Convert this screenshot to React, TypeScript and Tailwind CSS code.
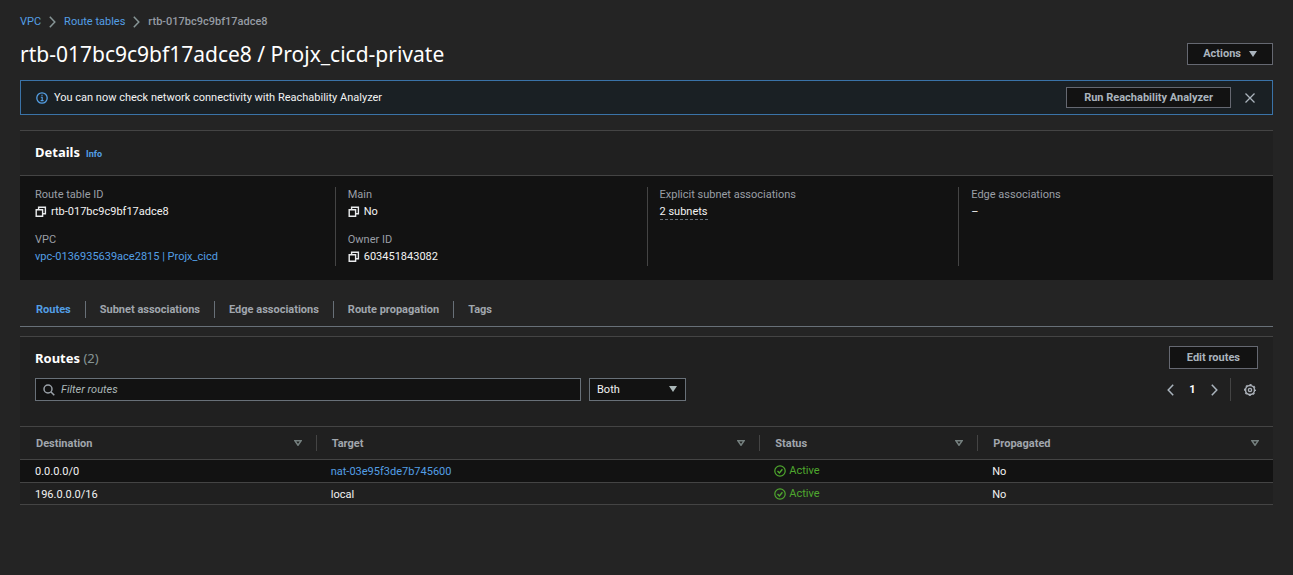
import type { ReactNode } from "react";

const fontStack = "font-['Roboto','Noto_Sans',sans-serif]";
const headingFont = "font-['Noto_Sans','Open_Sans',sans-serif]";

function Chevron({ left = false, className = "" }: { left?: boolean; className?: string }) {
  return (
    <svg width="7" height="12" viewBox="0 0 7 12" fill="none" stroke="currentColor" strokeWidth="1.5" className={className} aria-hidden="true">
      <path d={left ? "M6.2 0.8 L1.2 6 L6.2 11.2" : "M0.8 0.8 L5.8 6 L0.8 11.2"} />
    </svg>
  );
}

function InfoIcon() {
  return (
    <svg width="12" height="12" viewBox="0 0 12 12" fill="none" stroke="#539fe5" strokeWidth="1.3" className="shrink-0" aria-hidden="true">
      <circle cx="6" cy="6" r="5.2" />
      <path d="M4.8 5.2 H6.2 V8.5 M4.6 8.6 H7.6 M5.3 3.3 H6.7" strokeWidth="1.1" />
    </svg>
  );
}

function CopyIcon() {
  return (
    <svg width="12" height="12" viewBox="0 0 12 12" fill="none" stroke="#e9ebed" strokeWidth="1.4" className="shrink-0" aria-hidden="true">
      <path d="M1.2 3.7 H7.6 V10.3 H1.2 Z" />
      <path d="M3.6 3.7 V1.3 H10.4 V7.8 H7.6" />
    </svg>
  );
}

function Caret() {
  return (
    <svg width="8" height="6" viewBox="0 0 8 6" fill="currentColor" aria-hidden="true">
      <path d="M0 0 H8 L4 6 Z" />
    </svg>
  );
}

function SortIcon() {
  return (
    <svg width="8" height="6" viewBox="0 0 8 6" fill="none" stroke="#75807f" strokeWidth="1.5" aria-hidden="true">
      <path d="M1 0.8 H7 L4 5.2 Z" />
    </svg>
  );
}

function CheckIcon() {
  return (
    <svg width="12" height="12" viewBox="0 0 12 12" fill="none" stroke="currentColor" strokeWidth="1.2" className="shrink-0" aria-hidden="true">
      <circle cx="6" cy="6" r="5.2" />
      <path d="M3.5 6 L5.4 7.9 L8.4 4.3" strokeWidth="1.4" />
    </svg>
  );
}

function SearchIcon() {
  return (
    <svg width="12" height="12" viewBox="0 0 12 12" fill="none" stroke="#9aa1a8" strokeWidth="1.5" aria-hidden="true">
      <circle cx="5" cy="5" r="4" />
      <path d="M8 8 L11.3 11.3" />
    </svg>
  );
}

function GearIcon() {
  return (
    <svg width="12" height="12" viewBox="0 0 12 12" fill="none" stroke="#aab0b8" aria-hidden="true">
      <circle cx="6" cy="6" r="4.5" strokeWidth="1.5" />
      <circle cx="6" cy="6" r="5.4" strokeWidth="1.2" strokeDasharray="2.1 2.14" strokeDashoffset="1.05" />
      <circle cx="6" cy="6" r="1.6" strokeWidth="1.4" />
    </svg>
  );
}

function Field({ label, children }: { label: string; children: ReactNode }) {
  return (
    <div>
      <dt className="leading-4 text-[#9a9fa6]">{label}</dt>
      <dd className="flex h-[18px] items-center gap-1 whitespace-nowrap text-[#f2f3f3]">{children}</dd>
    </div>
  );
}

const buttonStyle =
  "flex items-center justify-center border border-[#656871] bg-[#121212] font-bold text-[#aab4bd] whitespace-nowrap";

const tabs = ["Routes", "Subnet associations", "Edge associations", "Route propagation", "Tags"];

const columns = [
  { name: "Destination", width: "w-[23.6%]" },
  { name: "Target", width: "w-[35.4%]" },
  { name: "Status", width: "w-[17.4%]" },
  { name: "Propagated", width: "w-[23.6%]" },
];

const routes = [
  { destination: "0.0.0.0/0", target: "nat-03e95f3de7b745600", link: true, row: "h-[23px] bg-[#121212]" },
  { destination: "196.0.0.0/16", target: "local", link: false, row: "h-[22px] bg-[#202020]" },
];

export default function App() {
  return (
    <main className={`min-h-screen bg-[#242424] px-5 pt-3 text-[11px] leading-4 text-[#f2f3f3] ${fontStack}`}>
      <nav aria-label="Breadcrumb">
        <ol className="flex h-5 items-center gap-2 text-[#539fe5]">
          <li><a href="#vpc">VPC</a></li>
          <li><Chevron className="text-[#879596]" /></li>
          <li><a href="#route-tables">Route tables</a></li>
          <li><Chevron className="text-[#879596]" /></li>
          <li className="font-medium text-[#959ba3]">rtb-017bc9c9bf17adce8</li>
        </ol>
      </nav>

      <header className="mt-[6px] flex h-8 items-center justify-between">
        <h1 className={`text-[21px] leading-8 text-white ${headingFont}`}>rtb-017bc9c9bf17adce8 / Projx_cicd-private</h1>
        <button type="button" className={`${buttonStyle} h-[22px] gap-2 px-[15px]`}>
          Actions <Caret />
        </button>
      </header>

      <section aria-label="Notification" className="mt-[10px] flex h-[35px] items-center gap-[6px] border border-[#3a73a8] bg-[#1a2024] pr-[17px] pl-[15px]">
        <InfoIcon />
        <p className="flex-1 text-[#f2f3f3]">You can now check network connectivity with Reachability Analyzer</p>
        <button type="button" className={`${buttonStyle} h-[21px] px-[17px]`}>Run Reachability Analyzer</button>
        <button type="button" aria-label="Dismiss" className="ml-2 text-[#aab4bd]">
          <svg width="10" height="10" viewBox="0 0 10 10" stroke="currentColor" strokeWidth="1.3" aria-hidden="true">
            <path d="M0.5 0.5 L9.5 9.5 M9.5 0.5 L0.5 9.5" />
          </svg>
        </button>
      </section>

      <section className="mt-[15px] border-t border-[#444444] bg-[#121212]">
        <div className="flex h-[45px] items-center gap-[6px] border-b border-[#444444] bg-[#202020] px-[15px] pb-[2px]">
          <h2 className={`text-[13px] font-bold text-white ${headingFont}`}>Details</h2>
          <a href="#info" className="pt-[3px] text-[9px] font-bold text-[#539fe5]">Info</a>
        </div>
        <div className="grid grid-cols-4 px-[3px] pt-[11px] pb-[14px]">
          <dl className="flex flex-col gap-[11px] pl-3">
            <Field label="Route table ID"><CopyIcon />rtb-017bc9c9bf17adce8</Field>
            <Field label="VPC"><a href="#vpc-id" className="text-[#539fe5]">vpc-0136935639ace2815 | Projx_cicd</a></Field>
          </dl>
          <dl className="flex flex-col gap-[11px] border-l border-[#444444] pl-3">
            <Field label="Main"><CopyIcon />No</Field>
            <Field label="Owner ID"><CopyIcon />603451843082</Field>
          </dl>
          <dl className="border-l border-[#444444] pl-3">
            <Field label="Explicit subnet associations">
              <span className="border-b border-dashed border-[#687078] leading-[14px]">2 subnets</span>
            </Field>
          </dl>
          <dl className="border-l border-[#444444] pl-3">
            <Field label="Edge associations">–</Field>
          </dl>
        </div>
      </section>

      <div role="tablist" className="mt-[13px] flex h-[34px] items-center border-b border-[#687078] pl-[2px]">
        {tabs.map((tab, i) => (
          <button
            key={tab}
            type="button"
            role="tab"
            aria-selected={i === 0}
            className={`h-[17px] border-[#687078] px-[14px] font-bold ${i === 0 ? "text-[#539fe5]" : "border-l text-[#a0a6ad]"}`}
          >
            {tab}
          </button>
        ))}
      </div>

      <section className="mt-[9px] border-t border-[#444444] bg-[#202020]">
        <div className="flex h-[41px] items-center justify-between px-[15px]">
          <h2 className={`text-[13px] font-bold text-white ${headingFont}`}>
            Routes <span className="font-normal text-[#879596]">(2)</span>
          </h2>
          <button type="button" className={`${buttonStyle} h-[23px] px-[17px]`}>Edit routes</button>
        </div>
        <div className="flex items-center px-[15px] pb-[25px]">
          <label className="flex h-[23px] w-[546px] items-center gap-[6px] border border-[#687078] bg-[#121212] px-[7px]">
            <SearchIcon />
            <input type="text" aria-label="Filter routes" placeholder="Filter routes" className="min-w-0 flex-1 bg-transparent outline-none placeholder:text-[#aab7b8] placeholder:italic" />
          </label>
          <div className="relative ml-2">
            <select aria-label="Propagation filter" className="block h-[23px] w-[97px] appearance-none border border-[#687078] bg-[#121212] px-[7px] text-[#f2f3f3]">
              <option>Both</option>
            </select>
            <span className="pointer-events-none absolute top-2 right-[9px] text-[#aab7b8]"><Caret /></span>
          </div>
          <div className="ml-auto flex items-center text-[#aab4bd]">
            <button type="button" aria-label="Previous page"><Chevron left /></button>
            <button type="button" aria-current="page" className="w-[37px] font-bold text-white">1</button>
            <button type="button" aria-label="Next page"><Chevron /></button>
            <span className="mr-[13px] ml-3 h-[23px] w-px bg-[#444444]" />
            <button type="button" aria-label="Preferences" className="mr-[2px]"><GearIcon /></button>
          </div>
        </div>
        <table className="w-full table-fixed border-collapse text-left">
          <thead>
            <tr className="h-[33px] border-y border-[#444444]">
              {columns.map((column, i) => (
                <th key={column.name} scope="col" className={`${column.width} p-0 font-bold text-[#a0a6ad]`}>
                  <div className={`flex h-4 items-center justify-between pr-[14px] ${i === 0 ? "pl-4" : "border-l border-[#444444] pl-[15px]"}`}>
                    <span className="pt-[2px]">{column.name}</span>
                    <button type="button" aria-label={`Sort by ${column.name}`}><SortIcon /></button>
                  </div>
                </th>
              ))}
            </tr>
          </thead>
          <tbody>
            {routes.map((route) => (
              <tr key={route.destination} className={`border-b border-[#444444] ${route.row}`}>
                <td className="pt-[2px] pb-0 pl-[15px]">{route.destination}</td>
                <td className="pt-[2px] pb-0 pl-[15px]">
                  {route.link ? <a href="#nat" className="text-[#539fe5]">{route.target}</a> : route.target}
                </td>
                <td className="py-0 pl-[15px]">
                  <span className="flex items-center gap-[3px] text-[#4fa82e]"><CheckIcon />Active</span>
                </td>
                <td className="pt-[2px] pb-0 pl-[15px]">No</td>
              </tr>
            ))}
          </tbody>
        </table>
      </section>
    </main>
  );
}
